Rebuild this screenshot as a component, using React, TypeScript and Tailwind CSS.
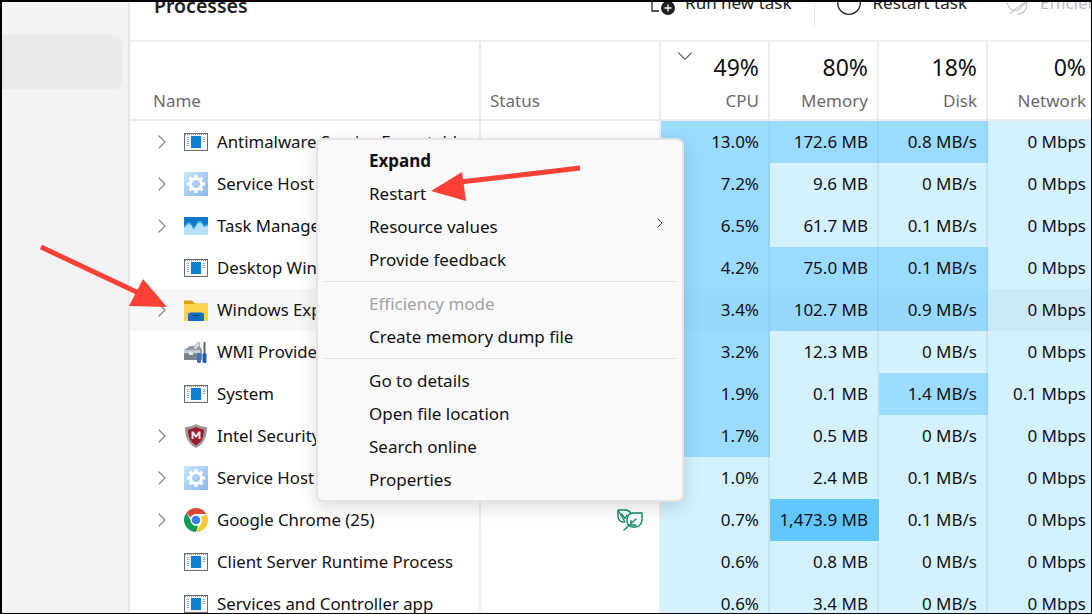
import React from 'react';
import { ChevronRight, ChevronDown } from 'lucide-react';

// heat: 0 light, 1 mid, 2 strong
type Heat = 0 | 1 | 2;
type Val = [string, Heat];

type Row = {
  name: string;
  icon: string;
  expand: boolean;
  cpu: Val;
  mem: Val;
  disk: Val;
  net: Val;
};

const ROWS: Row[] = [
  { name: 'Antimalware Service Executable', icon: 'app', expand: true, cpu: ['13.0%', 1], mem: ['172.6 MB', 1], disk: ['0.8 MB/s', 1], net: ['0 Mbps', 0] },
  { name: 'Service Host', icon: 'gear', expand: true, cpu: ['7.2%', 1], mem: ['9.6 MB', 0], disk: ['0 MB/s', 0], net: ['0 Mbps', 0] },
  { name: 'Task Manager', icon: 'task', expand: true, cpu: ['6.5%', 1], mem: ['61.7 MB', 0], disk: ['0.1 MB/s', 0], net: ['0 Mbps', 0] },
  { name: 'Desktop Window Manager', icon: 'app', expand: false, cpu: ['4.2%', 1], mem: ['75.0 MB', 1], disk: ['0.1 MB/s', 1], net: ['0 Mbps', 0] },
  { name: 'Windows Explorer', icon: 'folder', expand: true, cpu: ['3.4%', 1], mem: ['102.7 MB', 1], disk: ['0.9 MB/s', 1], net: ['0 Mbps', 0] },
  { name: 'WMI Provider Host', icon: 'wmi', expand: false, cpu: ['3.2%', 1], mem: ['12.3 MB', 0], disk: ['0 MB/s', 0], net: ['0 Mbps', 0] },
  { name: 'System', icon: 'app', expand: false, cpu: ['1.9%', 1], mem: ['0.1 MB', 0], disk: ['1.4 MB/s', 1], net: ['0.1 Mbps', 0] },
  { name: 'Intel Security', icon: 'shield', expand: true, cpu: ['1.7%', 1], mem: ['0.5 MB', 0], disk: ['0 MB/s', 0], net: ['0 Mbps', 0] },
  { name: 'Service Host', icon: 'gear', expand: true, cpu: ['1.0%', 0], mem: ['2.4 MB', 0], disk: ['0.1 MB/s', 0], net: ['0 Mbps', 0] },
  { name: 'Google Chrome (25)', icon: 'chrome', expand: true, cpu: ['0.7%', 0], mem: ['1,473.9 MB', 2], disk: ['0.1 MB/s', 0], net: ['0 Mbps', 0] },
  { name: 'Client Server Runtime Process', icon: 'app', expand: false, cpu: ['0.6%', 0], mem: ['0.8 MB', 0], disk: ['0 MB/s', 0], net: ['0 Mbps', 0] },
  { name: 'Services and Controller app', icon: 'app', expand: false, cpu: ['0.6%', 0], mem: ['3.4 MB', 0], disk: ['0 MB/s', 0], net: ['0 Mbps', 0] },
];

const AppIcon = () => (
  <svg width="24" height="18" viewBox="0 0 24 18">
    <rect x="0.5" y="0.5" width="23" height="17" fill="#f6f6f6" stroke="#6d6d6d" />
    <path d="M1 1.500h22" stroke="#9a9a9a" strokeDasharray="1 1" />
    <rect x="7" y="3" width="10" height="12" fill="#0f7fd4" />
    <path d="M3 4.500h2M3 6.500h2M3 8.500h2M3 10.500h2M3 12.500h2M19 4.500h2M19 6.500h2M19 8.500h2" stroke="#8fa8bd" />
  </svg>
);

// ids are per instance so the two gear rows don't share a gradient def
const GearIcon = () => {
  const id = React.useId();
  return (
    <svg width="24" height="24" viewBox="0 0 24 24">
      <defs>
        <linearGradient id={id} x1="0" y1="0" x2="1" y2="1">
          <stop offset="0" stopColor="#c6e8fb" />
          <stop offset="1" stopColor="#8db5ea" />
        </linearGradient>
      </defs>
      <rect width="24" height="24" fill={`url(#${id})`} />
      <circle cx="12" cy="12" r="5.500" fill="none" stroke="#fff" strokeWidth="3" />
      <path d="M12 3v4M12 17v4M3 12h4M17 12h4M5.600 5.600l2.800 2.800M15.600 15.600l2.800 2.800M18.400 5.600l-2.800 2.800M8.400 15.600l-2.800 2.800" stroke="#fff" strokeWidth="3" />
    </svg>
  );
};

const TaskIcon = () => (
  <svg width="24" height="18" viewBox="0 0 24 18">
    <rect width="24" height="18" fill="#0f79c9" />
    <path d="M0 9l4-4 3 1 2 4 2-1 3-5 3 0 3 4 4-1v12H0z" fill="#3fa9ee" />
    <path d="M0 11l4-4 3 1 2 4 2-1 3-5 3 0 3 4 4-1v10H0z" fill="#b5e2fa" />
  </svg>
);

const FolderIcon = () => (
  <svg width="24" height="21" viewBox="0 0 24 21">
    <path d="M0 1.500A1 1 0 0 1 1 0.500h7l3 3h13v4H0z" fill="#d99f12" />
    <rect y="4" width="24" height="17" fill="#fdd24f" />
    <path d="M4 21v-6a2.500 2.500 0 0 1 2.500-2.500h11a2.500 2.500 0 0 1 2.500 2.500v6z" fill="#0f6fbd" />
    <rect x="9" y="15" width="6" height="1" fill="#063f75" />
  </svg>
);

const WmiIcon = () => (
  <svg width="24" height="24" viewBox="0 0 24 24">
    <path d="M0 10l6-4h10l2 4v10H0z" fill="#8d9aa5" />
    <rect x="0" y="10" width="16" height="3" fill="#c4ccd2" />
    <rect x="0" y="14" width="15" height="6" fill="#77848f" />
    <rect x="5" y="12" width="4" height="3" fill="#e6e9eb" />
    <path d="M9 8l5-6 2 1-1 3-3 4z" fill="#d8dcdf" stroke="#71797f" strokeWidth="0.500" />
    <rect x="13" y="13" width="4" height="10" rx="1.500" fill="#3a72b8" />
    <rect x="19.500" y="2" width="2" height="11" fill="#5b6770" />
    <rect x="18.500" y="13" width="4" height="10" rx="1.500" fill="#1f5fa8" />
  </svg>
);

const ShieldIcon = () => (
  <svg width="24" height="24" viewBox="0 0 24 24">
    <path d="M12 0c3 2 7 3 11 3 0 10-3 17-11 21C4 20 1 13 1 3c4 0 8-1 11-3z" fill="#9a9a9a" />
    <path d="M12 3c3 1.500 6 2.500 8 2.500 0 8-3 13-8 16-5-3-8-8-8-16 2 0 5-1 8-2.500z" fill="#9c1c2c" />
    <path d="M7.500 15V7.500h2L12 11l2.500-3.500h2V15h-2v-4L12 14l-2.500-3v4z" fill="#f0e6e6" />
  </svg>
);

const ChromeIcon = () => (
  <svg width="24" height="24" viewBox="0 0 24 24">
    <circle cx="12" cy="12" r="12" fill="#fff" />
    <path d="M12 0a12 12 0 0 1 10.400 6H12a6 6 0 0 0-5.500 3.600L2.500 4.800A12 12 0 0 1 12 0z" fill="#db4437" />
    <path d="M22.400 6A12 12 0 0 1 12 24l5.200-9a6 6 0 0 0-.1-6z" fill="#fcc934" />
    <path d="M2.500 4.800l4.800 8.700a5.500 5.500 0 0 0 7 4L12 24A12 12 0 0 1 2.500 4.800z" fill="#0f9d58" />
    <circle cx="12" cy="12" r="5.500" fill="#fff" />
    <circle cx="12" cy="12" r="4.300" fill="#3b7de8" />
  </svg>
);

const LeafIcon = () => (
  <svg width="26" height="22" viewBox="0 0 26 22" fill="none" stroke="#0f8a6a" strokeWidth="1.400" strokeLinejoin="round" strokeLinecap="round">
    <path d="M1 1h7.500a5.500 5.500 0 0 1 5 3M8 13H6.500A5.500 5.500 0 0 1 1 7.500V1z" />
    <path d="M4.500 5l3.500 4.500M8 9.500l2-3.500" />
    <path d="M25 4v7a7 7 0 0 1-7 7h-2a6 6 0 0 1-6-6v-2a6 6 0 0 1 6-6z" />
    <path d="M7 21l12-11M14 16v-4.500M14 16h5" />
  </svg>
);

const ICONS: Record<string, React.FC> = {
  app: AppIcon,
  gear: GearIcon,
  task: TaskIcon,
  folder: FolderIcon,
  wmi: WmiIcon,
  shield: ShieldIcon,
  chrome: ChromeIcon,
};

const HeadCol = ({ pct, label, arrow, last }: { pct: string; label: string; arrow?: boolean; last?: boolean }) => (
  <div className={`relative flex flex-col items-end justify-end pb-[6px] ${last ? 'pr-[5px]' : 'border-r-2 border-[#ededed] pr-[9px]'}`}>
    {arrow && <ChevronDown className="absolute left-[11px] top-[1px] h-[26px] w-[26px] text-[#666]" strokeWidth={1} />}
    <span className="text-[23px] leading-[30px] text-[#111]">{pct}</span>
    <span className="mt-[7px] text-[17px] leading-[24px] text-[#6a6a6a]">{label}</span>
  </div>
);

const cellClass = (heat: Heat, hover: boolean) => {
  if (heat === 2) return 'bg-[#62c6ff] border-[#62c6ff]';
  if (hover) return heat === 1 ? 'bg-[#98d8fc] border-[#90d0f4]' : 'bg-[#cde9f8] border-[#c4e0ef]';
  return heat === 1 ? 'bg-[#9bdbff] border-[#93d3f7]' : 'bg-[#d3f1ff] border-[#cbe4f1]';
};

const Cell = ({ v, hover, last }: { v: Val; hover: boolean; last?: boolean }) => (
  <div
    className={`flex h-[42px] items-center justify-end text-[17px] text-[#111] ${
      last ? 'pr-[5px]' : 'border-r-2 pr-[9px]'
    } ${cellClass(v[1], hover)}`}
  >
    {v[0]}
  </div>
);

const MenuItem = ({ label, bold, muted, more }: { label: string; bold?: boolean; muted?: boolean; more?: boolean }) => (
  <div
    className={`relative flex h-[33px] items-center pl-[51px] text-[17px] ${
      bold ? 'font-bold text-[#111]' : muted ? 'text-[#a3a3a3]' : 'text-[#111]'
    }`}
  >
    {label}
    {more && <ChevronRight className="absolute right-[14px] top-[5px] h-[16px] w-[16px] text-[#333]" strokeWidth={1.5} />}
  </div>
);

const Sep = () => <div className="mx-[5px] my-[5px] h-px bg-[#e4e4e4]" />;

export default function App() {
  return (
    <div
      className="relative h-[614px] w-[1092px] overflow-hidden border-t-2 border-b border-l-2 border-r border-black bg-white text-[#111]"
      style={{ fontFamily: '"Noto Sans", "Open Sans", sans-serif' }}
    >
      <div className="flex h-full">
        {/* Sidebar */}
        <div className="h-full w-[126px] shrink-0 bg-[#f3f3f3] pt-[33px]">
          <div className="h-[54px] w-[120px] rounded-r-[7px] bg-[#eaeaea]" />
        </div>
        <div className="w-[2px] shrink-0 bg-[#e5e5e5]" />

        {/* Main */}
        <div className="flex min-w-0 flex-1 flex-col">
          {/* Toolbar */}
          <div className="flex h-[38px] shrink-0 items-start overflow-hidden">
            <span className="ml-[24px] mt-[-10px] text-[19.5px] font-semibold leading-[28px] text-[#222]">Processes</span>
            <div className="ml-auto flex items-start">
              <svg width="24" height="14" viewBox="0 0 24 14" className="mr-[10px]" fill="none">
                <path d="M1 0v9h7" stroke="#222" strokeWidth="1.300" />
                <circle cx="17" cy="6" r="7" fill="#222" />
                <path d="M17 2.500v7M13.500 6h7" stroke="#fff" strokeWidth="1.300" />
              </svg>
              <span className="mt-[-11px] whitespace-nowrap text-[17px] leading-[24px] text-[#222]">Run new task</span>
              <div className="ml-[22px] h-[25px] w-px bg-[#e8e8e8]" />
              <svg width="24" height="14" viewBox="0 0 24 14" className="ml-[22px] mr-[12px]" fill="none">
                <circle cx="12" cy="1" r="11.300" stroke="#222" strokeWidth="1.300" />
              </svg>
              <span className="mt-[-11px] whitespace-nowrap text-[17px] leading-[24px] text-[#222]">Restart task</span>
              <svg width="24" height="13" viewBox="0 0 24 13" className="ml-[38px] mr-[11px]" fill="none" stroke="#c8c8c8" strokeWidth="1.200">
                <path d="M2 0c1 6 5 9 10 9M12 9l10-9M4 12L20 0M22 0c0 8-4 12-10 12" />
              </svg>
              <span className="mt-[-11px] w-[51px] overflow-hidden whitespace-nowrap text-[17px] leading-[24px] text-[#bdbdbd]">Efficiency</span>
            </div>
          </div>
          <div className="h-[2px] shrink-0 bg-[#f0f0f0]" />

          {/* Table header */}
          <div className="grid h-[77px] shrink-0 grid-cols-[351px_180px_109px_109px_109px_1fr]">
            <div className="flex items-end border-r-2 border-[#ededed] pb-[6px] pl-[23px] text-[17px] leading-[24px] text-[#6a6a6a]">Name</div>
            <div className="flex items-end border-r-2 border-[#ededed] pb-[6px] pl-[9px] text-[17px] leading-[24px] text-[#6a6a6a]">Status</div>
            <HeadCol pct="49%" label="CPU" arrow />
            <HeadCol pct="80%" label="Memory" />
            <HeadCol pct="18%" label="Disk" />
            <HeadCol pct="0%" label="Network" last />
          </div>
          <div className="h-[2px] shrink-0 bg-[#ebebeb]" />

          {/* Rows */}
          <div className="flex flex-col">
            {ROWS.map((r, i) => {
              const Icon = ICONS[r.icon];
              const hover = i === 4;
              return (
                <div key={i} className={`grid h-[42px] shrink-0 grid-cols-[351px_180px_109px_109px_109px_1fr] ${hover ? 'bg-[#f7f7f7]' : ''}`}>
                  <div className="flex items-center whitespace-nowrap border-r-2 border-[#ededed] text-[16.8px]">
                    <div className="flex w-[54px] justify-start pl-[20px]">
                      {r.expand && <ChevronRight className="h-[24px] w-[24px] text-[#8a8a8a]" strokeWidth={1.25} />}
                    </div>
                    <div className="flex w-[24px] justify-center"><Icon /></div>
                    <span className="mb-px ml-[9px]">{r.name}</span>
                  </div>
                  <div className="flex items-center justify-end border-r-2 border-[#ededed] pr-[16px]">
                    {r.icon === 'chrome' && <LeafIcon />}
                  </div>
                  <Cell v={r.cpu} hover={hover} />
                  <Cell v={r.mem} hover={hover} />
                  <Cell v={r.disk} hover={hover} />
                  <Cell v={r.net} hover={hover} last />
                </div>
              );
            })}
          </div>
        </div>
      </div>

      {/* Context menu */}
      <div className="absolute left-[314px] top-[136px] h-[364px] w-[368px] rounded-[7px] border-2 border-[#e4e4e4] bg-[#f9f9f9] py-[4px] shadow-[0_6px_18px_rgba(0,0,0,0.14)]">
        <MenuItem label="Expand" bold />
        <MenuItem label="Restart" />
        <MenuItem label="Resource values" more />
        <MenuItem label="Provide feedback" />
        <Sep />
        <MenuItem label="Efficiency mode" muted />
        <MenuItem label="Create memory dump file" />
        <Sep />
        <MenuItem label="Go to details" />
        <MenuItem label="Open file location" />
        <MenuItem label="Search online" />
        <MenuItem label="Properties" />
      </div>

      {/* Annotation arrows */}
      <svg className="pointer-events-none absolute left-[-2px] top-[-2px]" width="1092" height="614" viewBox="0 0 1092 614">
        <path d="M580 168L460 182M41 247L145 296" stroke="#fb4136" strokeWidth="5" fill="none" />
        <path d="M431 191L462 172L466 201z" fill="#fb4136" />
        <path d="M129 306L143 279L167 307z" fill="#fb4136" />
      </svg>
    </div>
  );
}
